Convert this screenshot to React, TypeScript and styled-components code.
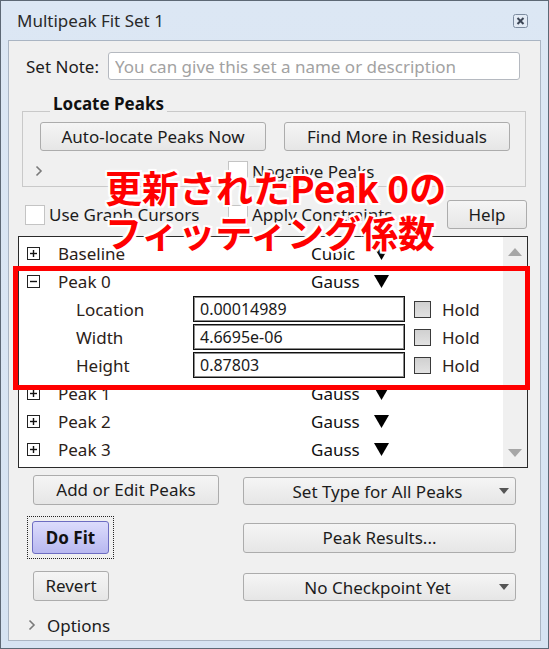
import * as React from 'react';
import styled, { createGlobalStyle } from 'styled-components';

const GlobalStyle = createGlobalStyle`
  html, body {
    margin: 0;
    padding: 0;
    background: #ffffff;
  }
  body {
    font-family: 'Noto Sans', 'DejaVu Sans', sans-serif;
  }
`;

type Param = { label: string; value: string };

const peaks = [
  { name: 'Baseline', type: 'Cubic', open: false },
  { name: 'Peak 0', type: 'Gauss', open: true },
  { name: 'Peak 1', type: 'Gauss', open: false },
  { name: 'Peak 2', type: 'Gauss', open: false },
  { name: 'Peak 3', type: 'Gauss', open: false },
];

const params: Param[] = [
  { label: 'Location', value: '0.00014989' },
  { label: 'Width', value: '4.6695e-06' },
  { label: 'Height', value: '0.87803' },
];

function Expander({ open }: { open: boolean }) {
  return (
    <svg width='13' height='13' viewBox='0 0 13 13'>
      <rect x='0.5' y='0.5' width='12' height='12' fill='#fff' stroke='#222' />
      <line x1='3' y1='6.5' x2='10' y2='6.5' stroke='#111' strokeWidth='1.4' />
      {!open && <line x1='6.5' y1='3' x2='6.5' y2='10' stroke='#111' strokeWidth='1.4' />}
    </svg>
  );
}

function BigTriangle() {
  return (
    <svg width='15' height='13' viewBox='0 0 15 13'>
      <polygon points='0,0 15,0 7.5,13' fill='#000' />
    </svg>
  );
}

function SmallArrow() {
  return (
    <svg width='10' height='6' viewBox='0 0 10 6'>
      <polygon points='0,0 10,0 5,6' fill='#555' />
    </svg>
  );
}

function Chevron() {
  return (
    <svg width='8' height='12' viewBox='0 0 8 12'>
      <polyline points='1.5,1.5 6,6 1.5,10.5' fill='none' stroke='#7a7a7a' strokeWidth='1.6' />
    </svg>
  );
}

function CloseIcon() {
  return (
    <svg width='15' height='14' viewBox='0 0 15 14'>
      <rect x='0.5' y='0.5' width='14' height='13' rx='2' fill='#e3ebf5' stroke='#7d8ca0' />
      <path d='M4.5 4 L10.5 10 M10.5 4 L4.5 10' stroke='#3c4656' strokeWidth='2' />
    </svg>
  );
}

function App() {
  return (
    <>
      <GlobalStyle />
      <Window>
        <TitleBar>
          <span>Multipeak Fit Set 1</span>
          <CloseIcon />
        </TitleBar>
        <Client>
          <NoteRow>
            <span>Set Note:</span>
            <NoteInput placeholder='You can give this set a name or description' readOnly />
          </NoteRow>

          <Group>
            <GroupHeader>
              <HeaderLine $w='28px' />
              <GroupTitle>Locate Peaks</GroupTitle>
              <HeaderLine />
            </GroupHeader>
            <GroupBody>
              <ButtonRow>
                <Button $w='226px' $h='29px'>Auto-locate Peaks Now</Button>
                <Button $w='226px' $h='29px'>Find More in Residuals</Button>
              </ButtonRow>
              <DisclosureRow>
                <Chevron />
                <CheckLabel $w='auto' $ml='185px'>
                  <Check />
                  Negative Peaks
                </CheckLabel>
              </DisclosureRow>
            </GroupBody>
          </Group>

          <OptionRow>
            <CheckLabel $w='203px'>
              <Check />
              Use Graph Cursors
            </CheckLabel>
            <CheckLabel $w='auto'>
              <Check />
              Apply Constraints
            </CheckLabel>
            <Button $w='80px' $h='29px' $push>Help</Button>
          </OptionRow>

          <ListBox>
            <Rows>
              {peaks.map((p) => (
                <React.Fragment key={p.name}>
                  <PeakRow>
                    <Expander open={p.open} />
                    <PeakName>{p.name}</PeakName>
                    <PeakType>{p.type}</PeakType>
                    <BigTriangle />
                  </PeakRow>
                  {p.open &&
                    params.map((q) => (
                      <ParamRow key={q.label}>
                        <ParamLabel>{q.label}</ParamLabel>
                        <ValueBox>{q.value}</ValueBox>
                        <HoldBox />
                        <span>Hold</span>
                      </ParamRow>
                    ))}
                </React.Fragment>
              ))}
            </Rows>
            <ScrollTrack>
              <ScrollArrow $up />
              <ScrollArrow />
            </ScrollTrack>
          </ListBox>

          <BottomGrid>
            <Cell>
              <Button $w='186px' $h='30px' $ml='6px'>Add or Edit Peaks</Button>
            </Cell>
            <Popup>
              <span>Set Type for All Peaks</span>
              <SmallArrow />
            </Popup>
            <Cell>
              <FocusRing>
                <FitButton>Do Fit</FitButton>
              </FocusRing>
            </Cell>
            <Button $w='273px' $h='30px'>Peak Results...</Button>
            <Cell>
              <Button $w='76px' $h='30px' $ml='6px'>Revert</Button>
            </Cell>
            <Popup>
              <span>No Checkpoint Yet</span>
              <SmallArrow />
            </Popup>
          </BottomGrid>

          <OptionsRow>
            <Chevron />
            <span>Options</span>
          </OptionsRow>
        </Client>

        <Highlight />
        <Annotation>
          更新されたPeak 0の
          <br />
          フィッティング係数
        </Annotation>
      </Window>
    </>
  );
}

const Window = styled.div`
  position: relative;
  width: 549px;
  height: 649px;
  box-sizing: border-box;
  border: 1px solid #5d6875;
  background: linear-gradient(#dce7f4, #d6e3f2);
  display: flex;
  flex-direction: column;
  font-family: 'Noto Sans', sans-serif;
  font-size: 17px;
  color: #1c1c1c;
  overflow: hidden;
`;

const TitleBar = styled.div`
  height: 39px;
  flex: none;
  display: flex;
  align-items: center;
  justify-content: space-between;
  padding: 0 20px 0 16px;
  color: #2a2a2a;
`;

const Client = styled.div`
  flex: 1;
  margin: 0 7px 7px;
  background: #f0f0f0;
  border: 1px solid #aab5c3;
  display: flex;
  flex-direction: column;
`;

const NoteRow = styled.div`
  margin-top: 11px;
  padding-left: 17px;
  height: 28px;
  display: flex;
  align-items: center;
  gap: 9px;
`;

const NoteInput = styled.input`
  width: 412px;
  height: 28px;
  box-sizing: border-box;
  border: 1px solid #b5b9c0;
  border-radius: 3px;
  background: #fff;
  padding: 0 6px;
  font-family: 'Noto Sans', sans-serif;
  font-size: 17px;
  outline: none;
  &::placeholder {
    color: #a2a2a2;
  }
`;

const Group = styled.div`
  margin: 12px 0 0 13px;
  width: 504px;
  display: flex;
  flex-direction: column;
`;

const GroupHeader = styled.div`
  height: 20px;
  display: flex;
  align-items: flex-end;
`;

const HeaderLine = styled.div<{ $w?: string }>`
  flex: ${(p) => (p.$w ? `0 0 ${p.$w}` : '1')};
  border-bottom: 1px solid #c9c9c9;
  height: 0;
`;

const GroupTitle = styled.span`
  font-weight: 700;
  line-height: 20px;
  margin-bottom: -2px;
  padding: 0 3px;
  color: #111;
`;

const GroupBody = styled.div`
  border: 1px solid #c9c9c9;
  border-top: none;
  padding: 10px 0 2px 12px;
`;

const ButtonRow = styled.div`
  display: flex;
  gap: 18px;
  padding-left: 5px;
`;

const Button = styled.button<{ $w: string; $h: string; $ml?: string; $push?: boolean }>`
  width: ${(p) => p.$w};
  height: ${(p) => p.$h};
  margin-left: ${(p) => (p.$push ? 'auto' : p.$ml ?? '0')};
  box-sizing: border-box;
  border: 1px solid #acacac;
  border-radius: 3px;
  background: linear-gradient(#f5f5f5, #e6e6e6);
  font-family: 'Noto Sans', sans-serif;
  font-size: 17px;
  color: #1c1c1c;
  padding: 0;
  display: flex;
  align-items: center;
  justify-content: center;
`;

const DisclosureRow = styled.div`
  margin-top: 7px;
  height: 26px;
  display: flex;
  align-items: center;
`;

const CheckLabel = styled.label<{ $w: string; $ml?: string }>`
  width: ${(p) => p.$w};
  margin-left: ${(p) => p.$ml ?? '0'};
  display: flex;
  align-items: center;
  gap: 4px;
  white-space: nowrap;
`;

const Check = styled.span`
  width: 20px;
  height: 20px;
  box-sizing: border-box;
  background: #fff;
  border: 1px solid #c4c4c4;
  flex: none;
`;

const OptionRow = styled.div`
  margin-top: 13px;
  height: 29px;
  padding: 0 13px 0 16px;
  display: flex;
  align-items: center;
`;

const ListBox = styled.div`
  margin: 7px 12px 0 9px;
  height: 232px;
  box-sizing: border-box;
  border: 1px solid #2a2a2a;
  display: flex;
  background: #fff;
`;

const Rows = styled.div`
  flex: 1;
  padding-top: 2px;
  overflow: hidden;
`;

const PeakRow = styled.div`
  height: 28px;
  display: flex;
  align-items: center;
  padding-left: 8px;
  color: #2b2118;
`;

const PeakName = styled.span`
  margin-left: 18px;
  width: 253px;
`;

const PeakType = styled.span`
  width: 63px;
  color: #111;
`;

const ParamRow = styled.div`
  height: 28px;
  display: flex;
  align-items: center;
  padding-left: 57px;
  color: #2b2118;
`;

const ParamLabel = styled.span`
  width: 117px;
`;

const ValueBox = styled.div`
  width: 212px;
  height: 26px;
  box-sizing: border-box;
  border: 1px solid #111;
  box-shadow: inset 0 0 0 1px #8c8c8c;
  background: #fff;
  padding-left: 6px;
  font-size: 16px;
  line-height: 24px;
  color: #1a1a1a;
`;

const HoldBox = styled.span`
  width: 17px;
  height: 17px;
  box-sizing: border-box;
  margin: 0 11px 0 9px;
  border: 1px solid #3a3a3a;
  background: linear-gradient(#d0d0d0, #e2e2e2);
`;

const ScrollTrack = styled.div`
  width: 24px;
  background: #f0f0f0;
  display: flex;
  flex-direction: column;
  justify-content: space-between;
  align-items: center;
  padding: 11px 0 10px;
`;

const ScrollArrow = styled.span<{ $up?: boolean }>`
  width: 0;
  height: 0;
  border-left: 7px solid transparent;
  border-right: 7px solid transparent;
  ${(p) => (p.$up ? 'border-bottom: 8px solid #a6a6a6;' : 'border-top: 8px solid #a6a6a6;')}
`;

const BottomGrid = styled.div`
  margin-top: 6px;
  padding-left: 18px;
  display: grid;
  grid-template-columns: 216px 273px;
  grid-template-rows: 31px 43px 31px;
  row-gap: 11px;
  align-items: center;
`;

const Cell = styled.div`
  display: flex;
  align-items: center;
`;

const Popup = styled.div`
  height: 28px;
  align-self: end;
  box-sizing: border-box;
  border: 1px solid #acacac;
  border-radius: 3px;
  background: linear-gradient(#f5f5f5, #e6e6e6);
  display: flex;
  align-items: center;
  padding: 0 6px 0 12px;
  span {
    flex: 1;
    text-align: center;
  }
`;

const FocusRing = styled.div`
  border: 1px dotted #222;
  padding: 4px;
`;

const FitButton = styled.button`
  width: 77px;
  height: 33px;
  box-sizing: border-box;
  border: 1px solid #6d6dc2;
  border-radius: 3px;
  background: linear-gradient(#dcdcfc, #b8b8f0);
  font-family: 'Noto Sans', sans-serif;
  font-size: 17px;
  font-weight: 700;
  color: #111;
  padding: 0;
`;

const OptionsRow = styled.div`
  margin-top: 12px;
  height: 24px;
  padding-left: 19px;
  display: flex;
  align-items: center;
  gap: 11px;
`;

const Highlight = styled.div`
  position: absolute;
  left: 12px;
  top: 265px;
  width: 517px;
  height: 124px;
  box-sizing: border-box;
  border: 5px solid #ff0000;
  pointer-events: none;
`;

const Annotation = styled.div`
  position: absolute;
  left: 104px;
  top: 164px;
  font-family: 'Noto Sans CJK JP', 'Noto Sans', sans-serif;
  font-weight: 700;
  font-size: 37px;
  line-height: 45px;
  color: #ff0000;
  white-space: nowrap;
  text-shadow: 2px 0 #fff, -2px 0 #fff, 0 2px #fff, 0 -2px #fff, 2px 2px #fff,
    -2px -2px #fff, 2px -2px #fff, -2px 2px #fff, 0 0 5px #fff;
`;

export default App;
